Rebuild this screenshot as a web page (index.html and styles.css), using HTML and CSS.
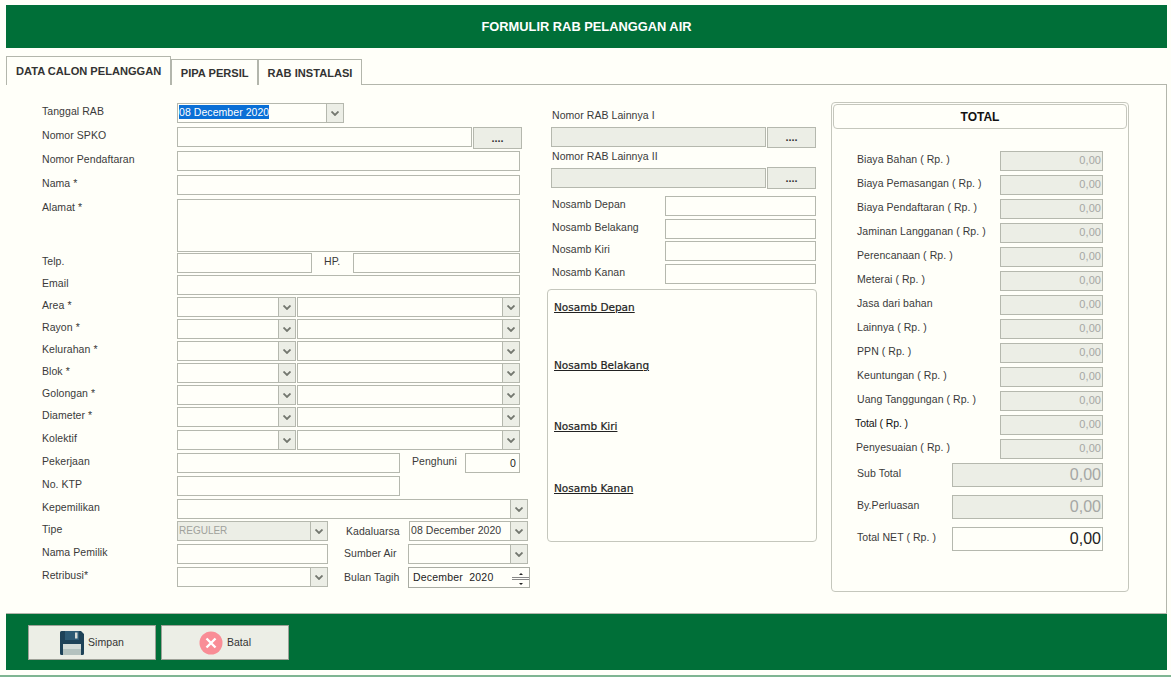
FILE: index.html
```html
<!DOCTYPE html>
<html lang="id">
<head>
<meta charset="utf-8">
<title>Formulir RAB Pelanggan Air</title>
<link rel="stylesheet" href="styles.css">
</head>
<body>
<div class="window">
  <header class="title">FORMULIR RAB PELANGGAN AIR</header>
  <nav class="tabs">
    <div class="tab active">DATA CALON PELANGGAN</div>
    <div class="tab">PIPA PERSIL</div>
    <div class="tab">RAB INSTALASI</div>
  </nav>
  <main class="panel">
    <section class="col-left">
      <div class="row"><span class="lab">Tanggal RAB</span><div class="sel w167"><span class="val"><span class="hl">08 December 2020</span></span><span class="arrow"><svg viewBox="0 0 8 5"><path d="M0.5 0.5L4 4L7.5 0.5"/></svg></span></div></div>
      <div class="row"><span class="lab">Nomor SPKO</span><div class="inp w295"></div><div class="dots btn-spko">....</div></div>
      <div class="row"><span class="lab">Nomor Pendaftaran</span><div class="inp w343"></div></div>
      <div class="row"><span class="lab">Nama *</span><div class="inp w343"></div></div>
      <div class="row tall"><span class="lab">Alamat *</span><div class="inp w343 area"></div></div>
      <div class="row r22"><span class="lab">Telp.</span><div class="inp w135"></div><span class="lab-hp">HP.</span><div class="inp w167"></div></div>
      <div class="row r22"><span class="lab">Email</span><div class="inp w343"></div></div>
      <div class="row r22"><span class="lab">Area *</span><div class="sel w119"><span class="val"></span><span class="arrow"><svg viewBox="0 0 8 5"><path d="M0.5 0.5L4 4L7.5 0.5"/></svg></span></div><div class="sel w223"><span class="val"></span><span class="arrow"><svg viewBox="0 0 8 5"><path d="M0.5 0.5L4 4L7.5 0.5"/></svg></span></div></div>
      <div class="row r22"><span class="lab">Rayon *</span><div class="sel w119"><span class="val"></span><span class="arrow"><svg viewBox="0 0 8 5"><path d="M0.5 0.5L4 4L7.5 0.5"/></svg></span></div><div class="sel w223"><span class="val"></span><span class="arrow"><svg viewBox="0 0 8 5"><path d="M0.5 0.5L4 4L7.5 0.5"/></svg></span></div></div>
      <div class="row r22"><span class="lab">Kelurahan *</span><div class="sel w119"><span class="val"></span><span class="arrow"><svg viewBox="0 0 8 5"><path d="M0.5 0.5L4 4L7.5 0.5"/></svg></span></div><div class="sel w223"><span class="val"></span><span class="arrow"><svg viewBox="0 0 8 5"><path d="M0.5 0.5L4 4L7.5 0.5"/></svg></span></div></div>
      <div class="row r22"><span class="lab">Blok *</span><div class="sel w119"><span class="val"></span><span class="arrow"><svg viewBox="0 0 8 5"><path d="M0.5 0.5L4 4L7.5 0.5"/></svg></span></div><div class="sel w223"><span class="val"></span><span class="arrow"><svg viewBox="0 0 8 5"><path d="M0.5 0.5L4 4L7.5 0.5"/></svg></span></div></div>
      <div class="row r22"><span class="lab">Golongan *</span><div class="sel w119"><span class="val"></span><span class="arrow"><svg viewBox="0 0 8 5"><path d="M0.5 0.5L4 4L7.5 0.5"/></svg></span></div><div class="sel w223"><span class="val"></span><span class="arrow"><svg viewBox="0 0 8 5"><path d="M0.5 0.5L4 4L7.5 0.5"/></svg></span></div></div>
      <div class="row r23"><span class="lab">Diameter *</span><div class="sel w119"><span class="val"></span><span class="arrow"><svg viewBox="0 0 8 5"><path d="M0.5 0.5L4 4L7.5 0.5"/></svg></span></div><div class="sel w223"><span class="val"></span><span class="arrow"><svg viewBox="0 0 8 5"><path d="M0.5 0.5L4 4L7.5 0.5"/></svg></span></div></div>
      <div class="row r23"><span class="lab">Kolektif</span><div class="sel w119"><span class="val"></span><span class="arrow"><svg viewBox="0 0 8 5"><path d="M0.5 0.5L4 4L7.5 0.5"/></svg></span></div><div class="sel w223"><span class="val"></span><span class="arrow"><svg viewBox="0 0 8 5"><path d="M0.5 0.5L4 4L7.5 0.5"/></svg></span></div></div>
      <div class="row r23"><span class="lab">Pekerjaan</span><div class="inp w223"></div><span class="lab-peng">Penghuni</span><div class="inp w55 num">0</div></div>
      <div class="row r23"><span class="lab">No. KTP</span><div class="inp w223"></div></div>
      <div class="row r22"><span class="lab">Kepemilikan</span><div class="sel w351"><span class="val"></span><span class="arrow"><svg viewBox="0 0 8 5"><path d="M0.5 0.5L4 4L7.5 0.5"/></svg></span></div></div>
      <div class="row r23"><span class="lab">Tipe</span><div class="sel w151 off"><span class="val">REGULER</span><span class="arrow"><svg viewBox="0 0 8 5"><path d="M0.5 0.5L4 4L7.5 0.5"/></svg></span></div><span class="lab-kad">Kadaluarsa</span><div class="sel w119 low"><span class="val">08 December 2020</span><span class="arrow"><svg viewBox="0 0 8 5"><path d="M0.5 0.5L4 4L7.5 0.5"/></svg></span></div></div>
      <div class="row r23"><span class="lab">Nama Pemilik</span><div class="inp w151"></div><span class="lab-sum">Sumber Air</span><div class="sel w120"><span class="val"></span><span class="arrow"><svg viewBox="0 0 8 5"><path d="M0.5 0.5L4 4L7.5 0.5"/></svg></span></div></div>
      <div class="row"><span class="lab">Retribusi*</span><div class="sel w151"><span class="val"></span><span class="arrow"><svg viewBox="0 0 8 5"><path d="M0.5 0.5L4 4L7.5 0.5"/></svg></span></div><span class="lab-sum lab-bulan">Bulan Tagih</span><div class="spin"><span class="spin-val">December&nbsp; 2020</span><span class="spin-btns"><span class="up"></span><span class="down"></span></span></div></div>
    </section>

    <section class="col-mid">
      <div class="mid-label">Nomor RAB Lainnya I</div>
      <div class="mid-pick one"><div class="inp off w215"></div><div class="dots">....</div></div>
      <div class="mid-label">Nomor RAB Lainnya II</div>
      <div class="mid-pick two"><div class="inp off w215"></div><div class="dots">....</div></div>
      <div class="mid-row first"><span>Nosamb Depan</span><div class="inp w151"></div></div>
      <div class="mid-row short"><span>Nosamb Belakang</span><div class="inp w151"></div></div>
      <div class="mid-row"><span>Nosamb Kiri</span><div class="inp w151"></div></div>
      <div class="mid-row"><span>Nosamb Kanan</span><div class="inp w151"></div></div>
      <div class="photos">
        <div class="photo h58">Nosamb Depan</div>
        <div class="photo h61">Nosamb Belakang</div>
        <div class="photo h62">Nosamb Kiri</div>
        <div class="photo">Nosamb Kanan</div>
      </div>
    </section>

    <section class="col-right">
      <h2 class="total-head">TOTAL</h2>
      <div class="sum-list">
        <div class="sum"><span>Biaya Bahan ( Rp. )</span><div class="amt">0,00</div></div>
        <div class="sum"><span>Biaya Pemasangan ( Rp. )</span><div class="amt">0,00</div></div>
        <div class="sum"><span>Biaya Pendaftaran ( Rp. )</span><div class="amt">0,00</div></div>
        <div class="sum"><span>Jaminan Langganan ( Rp. )</span><div class="amt">0,00</div></div>
        <div class="sum"><span>Perencanaan ( Rp. )</span><div class="amt">0,00</div></div>
        <div class="sum"><span>Meterai ( Rp. )</span><div class="amt">0,00</div></div>
        <div class="sum"><span>Jasa dari bahan</span><div class="amt">0,00</div></div>
        <div class="sum"><span>Lainnya ( Rp. )</span><div class="amt">0,00</div></div>
        <div class="sum"><span>PPN ( Rp. )</span><div class="amt">0,00</div></div>
        <div class="sum"><span>Keuntungan ( Rp. )</span><div class="amt">0,00</div></div>
        <div class="sum"><span>Uang Tanggungan ( Rp. )</span><div class="amt">0,00</div></div>
        <div class="sum dark"><span>Total ( Rp. )</span><div class="amt">0,00</div></div>
        <div class="sum pen"><span>Penyesuaian ( Rp. )</span><div class="amt">0,00</div></div>
        <div class="big"><span>Sub Total</span><div class="amt-big">0,00</div></div>
        <div class="big"><span>By.Perluasan</span><div class="amt-big">0,00</div></div>
        <div class="big"><span>Total NET ( Rp. )</span><div class="amt-big live">0,00</div></div>
      </div>
    </section>
  </main>
  <footer class="foot">
    <div class="action">
      <svg class="ico" viewBox="0 0 24 24"><path fill="#1e4258" d="M1.5 0H21l3 3v19.5a1.5 1.5 0 0 1-1.5 1.500h-21A1.5 1.5 0 0 1 0 22.500V1.500A1.500 1.500 0 0 1 1.500 0z"/><rect x="5" y="0" width="14" height="9" fill="#2d5a74"/><rect x="15" y="1.500" width="2.500" height="6" fill="#d8dcd8"/><rect x="3" y="13" width="18" height="11" fill="#d5dcd8"/><rect x="3" y="18" width="18" height="6" fill="#b4c2bf"/></svg>
      <span>Simpan</span>
    </div>
    <div class="action">
      <svg class="ico" viewBox="0 0 24 24"><circle cx="12" cy="12" r="11.500" fill="#f98d96"/><path d="M7.500 7.500L16.500 16.500M16.500 7.500L7.500 16.500" stroke="#fff" stroke-width="2.400" fill="none"/></svg>
      <span>Batal</span>
    </div>
  </footer>
</div>
<div class="strip"></div>
</body>
</html>
```
FILE: styles.css
```css
* { box-sizing: border-box; }
html, body { margin: 0; height: 100%; }
body {
  width: 1171px; height: 677px; overflow: hidden;
  background: #fffff9;
  font: 10.5px/16px "Liberation Sans", Arial, sans-serif;
  color: #3a3a3a;
  letter-spacing: 0.06px;
}
.window { padding: 5px 0 0 6px; height: 670px; display: flex; flex-direction: column; width: 1167px; }
.title {
  height: 43px; flex: none; background: #006f38; color: #fff;
  font-weight: bold; font-size: 12.85px; line-height: 43px; text-align: center;
  letter-spacing: 0;
}
.tabs { display: flex; align-items: flex-end; height: 37px; flex: none; position: relative; z-index: 1; }
.tab {
  height: 26px; border: 1px solid #b3b6ac; border-bottom: 0;
  padding: 0 8.5px; font-weight: bold; font-size: 11.1px; line-height: 26px; color: #333;
  letter-spacing: 0;
  background: #fffff9;
}
.tab.active { height: 29px; padding: 0 9px; line-height: 28px; }
.panel {
  height: 530px; flex: none; border-top: 1px solid #b3b6ac; border-right: 1px solid #b3b6ac;
  border-bottom: 1px solid #b3b6ac; margin-top: -1px;
  display: flex; align-items: flex-start; padding-left: 36px;
}
.col-left { width: 499px; flex: none; padding-top: 18px; }
.row { display: flex; height: 24px; }
.row.tall { height: 54px; }
.row.r22 { height: 22px; }
.row.r23 { height: 23px; }
.lab { width: 135px; flex: none; }
.inp, .sel, .spin, .dots, .amt, .amt-big { border: 1px solid #b5b8ae; height: 20px; flex: none; }
.w55 { width: 55px; } .w119 { width: 119px; } .w120 { width: 120px; } .w135 { width: 135px; }
.w151 { width: 151px; } .w167 { width: 167px; } .w215 { width: 215px; } .w223 { width: 223px; }
.w295 { width: 295px; } .w343 { width: 343px; } .w351 { width: 351px; }
.area { height: 53px; }
.num { text-align: right; padding-right: 3px; line-height: 19px; color: #222; }
.sel { display: flex; }
.sel.w119 + .sel { margin-left: 1px; }
.val { flex: 1; min-width: 0; padding-left: 1px; line-height: 15px; white-space: nowrap; overflow: hidden; }
.off .val, .low .val { line-height: 17px; }
.hl { background: #0a6fd6; color: #fff; display: inline-block; line-height: 14px; height: 14px; margin-top: 1px; }
.arrow { width: 17px; flex: none; border-left: 1px solid #b5b8ae; background: #eceee6; display: flex; align-items: center; justify-content: center; }
.arrow svg { width: 8px; height: 5px; }
.arrow path { fill: none; stroke: #73776f; stroke-width: 1.8; }
.off { background: #eceee6; }
.off .val { color: #a0a29c; font-size: 10px; padding-left: 1px; letter-spacing: 0; }
.dots {
  width: 49px; height: 21px; background: #eceee6; text-align: center;
  font-weight: bold; font-size: 11px; line-height: 18px; color: #333; letter-spacing: 0;
}
.btn-spko { margin-left: 1px; height: 22px; line-height: 20px; }
.lab-hp { width: 41px; flex: none; padding-left: 12px; }
.lab-peng { width: 65px; flex: none; padding-left: 12px; }
.lab-kad { width: 81px; flex: none; padding: 2px 0 0 18px; }
.lab-sum { width: 80px; flex: none; padding: 1px 0 0 16px; }
.lab-bulan { padding-top: 2px; }
.spin { width: 122px; height: 21px; display: flex; border-color: #a9aca3; }
.spin-val { flex: 1; padding-left: 4px; line-height: 19px; color: #222; letter-spacing: 0.2px; white-space: nowrap; }
.spin-btns { width: 17px; flex: none; display: flex; flex-direction: column; padding: 2px 0 1px; gap: 1px; }
.spin-btns span { flex: 1; background: #fffff9; border-bottom: 1px solid #888; position: relative; }
.spin-btns .down { border-top: 1px solid #888; border-bottom: 0; }
.spin-btns span::after { content: ""; position: absolute; left: 7px; top: 3px; border: 2px solid transparent; border-top: 0; border-bottom-color: #222; }
.spin-btns .down::after { border-bottom: 0; border-top: 2px solid #222; }

.col-mid { width: 270px; flex: none; margin-left: 6px; padding-top: 22px; }
.mid-label { padding-left: 5px; height: 20px; }
.mid-pick { display: flex; gap: 1px; padding-left: 4px; align-items: flex-start; }
.mid-pick.one { height: 21px; }
.mid-pick.two { height: 25px; }
.mid-pick.two .dots { margin-top: -1px; height: 22px; line-height: 20px; }
.mid-row { display: flex; padding-left: 5px; justify-content: space-between; width: 269px; height: 23px; }
.mid-row.first { margin-top: 3px; }
.mid-row.short { height: 22px; }
.photos { border: 1px solid #c5c7bd; border-radius: 4px; height: 253px; margin-top: 2px; padding: 9px 0 0 6px; }
.photo { font: 10.5px/16px "DejaVu Sans", sans-serif; color: #222; text-decoration: underline; height: 58px; letter-spacing: 0; -webkit-text-stroke: 0.2px #222; }
.h61 { height: 61px; } .h62 { height: 62px; }

.col-right {
  width: 298px; height: 490px; flex: none; margin-left: 14px; margin-top: 17px;
  border: 1px solid #c5c7bd; border-radius: 4px; padding: 1px;
}
.total-head {
  margin: 0; height: 25px; border: 1px solid #c5c7bd; border-radius: 4px;
  font-size: 12px; line-height: 25px; text-align: center; color: #111; letter-spacing: 0; font-weight: bold;
}
.sum-list { padding: 22px 24px 0 24px; }
.sum { display: flex; justify-content: space-between; height: 24px; }
.dark span { color: #111; letter-spacing: -0.1px; margin-left: -2px; }
.pen span { margin-left: -1px; }
.amt { width: 103px; background: #eceee6; text-align: right; padding-right: 1px; line-height: 17px; color: #a5a7a4; font-size: 11px; }
.big { display: flex; justify-content: space-between; height: 32px; line-height: 20px; }
.amt-big { width: 151px; height: 24px; background: #eceee6; text-align: right; padding-right: 1px; font-size: 16px; line-height: 22px; color: #a5a7a4; letter-spacing: 0; }
.amt-big.live { background: #fffff9; color: #222; }
.foot {
  height: 56px; flex: none; background: #006f38;
  display: flex; gap: 5px; padding: 11px 0 0 22px;
}
.action {
  width: 128px; height: 35px; background: #eceee6; border: 1px solid #9ea198;
  display: flex; align-items: center; justify-content: center; gap: 4px;
}
.ico { width: 24px; height: 24px; flex: none; }
.foot span { color: #333; margin-top: -2px; }
.strip { height: 2px; margin-top: 5px; background: #7fb592; }
```
